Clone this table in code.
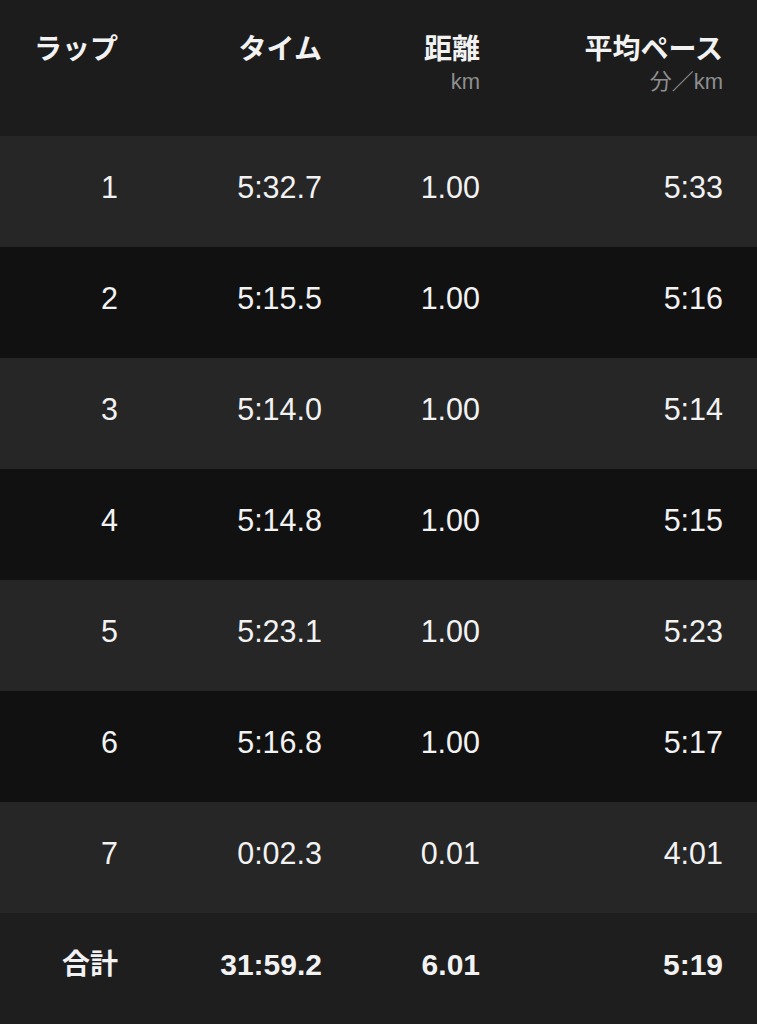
const laps = [
  { lap: "1", time: "5:32.7", dist: "1.00", pace: "5:33" },
  { lap: "2", time: "5:15.5", dist: "1.00", pace: "5:16" },
  { lap: "3", time: "5:14.0", dist: "1.00", pace: "5:14" },
  { lap: "4", time: "5:14.8", dist: "1.00", pace: "5:15" },
  { lap: "5", time: "5:23.1", dist: "1.00", pace: "5:23" },
  { lap: "6", time: "5:16.8", dist: "1.00", pace: "5:17" },
  { lap: "7", time: "0:02.3", dist: "0.01", pace: "4:01" },
]

const cols = "grid grid-cols-[118px_204px_158px_243px] pr-[34px] text-right"

export default function App() {
  return (
    <div
      className="w-[757px] h-[1024px] bg-[#1c1c1c] text-[#f2f2f2] overflow-hidden"
      style={{ fontFamily: '"Liberation Sans", "Noto Sans CJK JP", sans-serif' }}
    >
      {/* header */}
      <div className={`${cols} h-[136px] pt-[31px] bg-[#1c1c1c]`}>
        <div className="text-[28px] font-bold leading-[38px]">ラップ</div>
        <div className="text-[28px] font-bold leading-[38px]">タイム</div>
        <div>
          <div className="text-[28px] font-bold leading-[38px]">距離</div>
          <div className="text-[22px] leading-[26px] text-[#8e8e8e]">km</div>
        </div>
        <div>
          <div className="text-[28px] font-bold leading-[38px]">平均ペース</div>
          <div className="text-[22px] leading-[26px] text-[#8e8e8e]">分／km</div>
        </div>
      </div>

      {laps.map((r, i) => (
        <div
          key={r.lap}
          className={`${cols} h-[111px] items-center text-[30.5px] pb-[8px] ${
            i % 2 === 0 ? "bg-[#262626]" : "bg-[#111111]"
          }`}
        >
          <div>{r.lap}</div>
          <div>{r.time}</div>
          <div>{r.dist}</div>
          <div>{r.pace}</div>
        </div>
      ))}

      {/* total */}
      <div className={`${cols} h-[111px] items-center font-bold pb-[8px] bg-[#1e1e1e]`}>
        <div className="text-[28px]">合計</div>
        <div className="text-[30px]">31:59.2</div>
        <div className="text-[30px]">6.01</div>
        <div className="text-[30px]">5:19</div>
      </div>
    </div>
  )
}
